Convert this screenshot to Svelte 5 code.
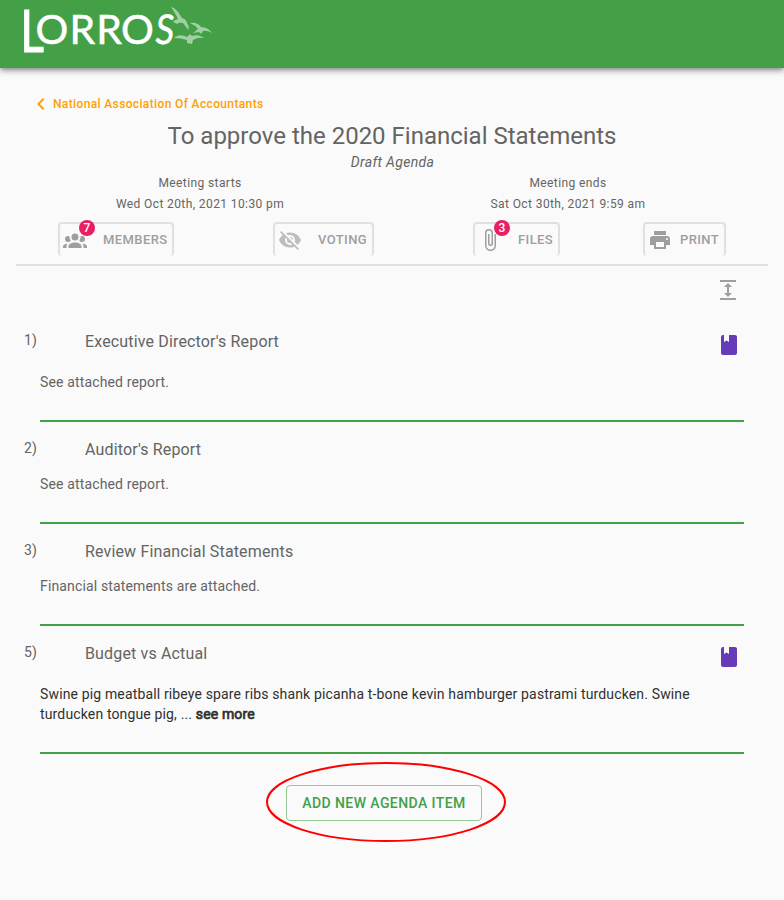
<script>
  const icons = {
    members: 'M12,5.5A3.5,3.5 0 0,1 15.5,9A3.5,3.5 0 0,1 12,12.5A3.5,3.5 0 0,1 8.5,9A3.5,3.5 0 0,1 12,5.5M5,8C5.56,8 6.08,8.15 6.53,8.42C6.38,9.85 6.8,11.27 7.66,12.38C7.16,13.34 6.16,14 5,14A3,3 0 0,1 2,11A3,3 0 0,1 5,8M19,8A3,3 0 0,1 22,11A3,3 0 0,1 19,14C17.84,14 16.84,13.34 16.34,12.38C17.2,11.27 17.62,9.85 17.47,8.42C17.92,8.15 18.44,8 19,8M5.5,18.25C5.5,16.18 8.41,14.5 12,14.5C15.59,14.5 18.5,16.18 18.5,18.25V20H5.5V18.25M0,20V18.5C0,17.11 1.89,15.94 4.45,15.6C3.86,16.28 3.5,17.22 3.5,18.25V20H0M24,20H20.5V18.25C20.5,17.22 20.14,16.28 19.55,15.6C22.11,15.94 24,17.11 24,18.5V20Z',
    voting: 'M11.83,9L15,12.16C15,12.11 15,12.05 15,12A3,3 0 0,0 12,9C11.94,9 11.89,9 11.83,9M7.53,9.8L9.08,11.35C9.03,11.56 9,11.77 9,12A3,3 0 0,0 12,15C12.22,15 12.44,14.97 12.65,14.92L14.2,16.47C13.53,16.8 12.79,17 12,17A5,5 0 0,1 7,12C7,11.21 7.2,10.47 7.53,9.8M2,4.27L4.28,6.55L4.73,7C3.08,8.3 1.78,10 1,12C2.73,16.39 7,19.5 12,19.5C13.55,19.5 15.03,19.2 16.38,18.66L16.81,19.08L19.73,22L21,20.73L3.27,3M12,7A5,5 0 0,1 17,12C17,12.64 16.87,13.26 16.64,13.82L19.57,16.75C21.07,15.5 22.27,13.86 23,12C21.27,7.61 17,4.5 12,4.5C10.6,4.5 9.26,4.75 8,5.2L10.17,7.35C10.74,7.13 11.35,7 12,7Z',
    files: 'M16.5,6V17.5A4,4 0 0,1 12.5,21.5A4,4 0 0,1 8.5,17.5V5A2.5,2.5 0 0,1 11,2.5A2.5,2.5 0 0,1 13.5,5V15.5A1,1 0 0,1 12.5,16.5A1,1 0 0,1 11.5,15.5V6H10V15.5A2.5,2.5 0 0,0 12.5,18A2.5,2.5 0 0,0 15,15.5V5A4,4 0 0,0 11,1A4,4 0 0,0 7,5V17.5A5.5,5.5 0 0,0 12.5,23A5.5,5.5 0 0,0 18,17.5V6H16.5Z',
    print: 'M18,3H6V7H18M19,12A1,1 0 0,1 18,11A1,1 0 0,1 19,10A1,1 0 0,1 20,11A1,1 0 0,1 19,12M16,19H8V14H16M19,8H5A3,3 0 0,0 2,11V17H6V21H18V17H22V11A3,3 0 0,0 19,8Z',
    book: 'M18,22A2,2 0 0,0 20,20V4C20,2.89 19.1,2 18,2H12V9L9.5,7.5L7,9V2H6A2,2 0 0,0 4,4V20A2,2 0 0,0 6,22H18Z',
    expand: 'M4 20h16v2H4zM4 2h16v2H4zm9 7h3l-4-4-4 4h3v6H8l4 4 4-4h-3z',
    back: 'M15.41,16.58L10.83,12L15.41,7.41L14,6L8,12L14,18L15.41,16.58Z'
  };
  const tabs = [
    { key: 'members', label: 'Members', badge: 7 },
    { key: 'voting', label: 'Voting' },
    { key: 'files', label: 'Files', badge: 3 },
    { key: 'print', label: 'Print' }
  ];
  const items = [
    { n: 1, title: "Executive Director's Report", text: 'See attached report.', marked: true },
    { n: 2, title: "Auditor's Report", text: 'See attached report.' },
    { n: 3, title: 'Review Financial Statements', text: 'Financial statements are attached.' },
    { n: 5, title: 'Budget vs Actual', text: 'Swine pig meatball ribeye spare ribs shank picanha t-bone kevin hamburger pastrami turducken. Swine turducken tongue pig, ...', marked: true, more: true }
  ];
</script>

{#snippet icon(name, size = 24)}
  <svg width={size} height={size} viewBox="0 0 24 24" fill="currentColor"><path d={icons[name]} /></svg>
{/snippet}

<div class="app">
  <header>
    <svg class="logo" width="216" height="64" viewBox="0 0 216 64">
      <text class="initial" transform="translate(20.2 51.7) scale(.78 1)">L</text>
      <text class="word" y="44.3" x="35.4 69.5 96.3 121">ORRO</text>
      <text class="word" transform="translate(154.3 44.3) skewX(-6) scale(.84 1)">S</text>
      <g fill="#a2d0a4">
        <path d="M171 7C175 8 178 11 180 15L182 18Q186 19 187 23Q189 26 189 30C186 28 185 25 183 23Q179 22 177 24L173 22Q174 20 178 19C176 15 174 11 171 7Z" />
        <path d="M190 23C195 22 199 24 201 27Q208 27 212 33Q207 30 203 31L201 34L199 32L193 33L198 29Q195 25 190 23Z" />
        <path d="M174 38C178 34 183 35 187 37L190 34L192 36C197 34 202 36 204 38Q198 37 193 40L192 44L187 43L187 40Q181 38 174 38Z" />
      </g>
    </svg>
  </header>

  <main>
    <a class="back" href="#top">{@render icon('back')}<span>National Association Of Accountants</span></a>
    <h1>To approve the 2020 Financial Statements</h1>
    <p class="status">Draft Agenda</p>
    <section class="times">
      <div><span>Meeting starts</span><span>Wed Oct 20th, 2021 10:30 pm</span></div>
      <div><span>Meeting ends</span><span>Sat Oct 30th, 2021 9:59 am</span></div>
    </section>
    <nav>
      {#each tabs as tab}
        <button class="tab {tab.key}">
          <span class="glyph">{@render icon(tab.key)}{#if tab.badge}<b class="badge">{tab.badge}</b>{/if}</span>
          <span class="label">{tab.label}</span>
        </button>
      {/each}
    </nav>
    <div class="tools">{@render icon('expand')}</div>

    {#each items as item}
      <article class:marked={item.marked} class:long={item.more}>
        <div class="head">
          <span class="num">{item.n})</span>
          <h2>{item.title}</h2>
          {#if item.marked}<span class="book">{@render icon('book')}</span>{/if}
        </div>
        <p class="body">{item.text}{#if item.more}{' '}<b>see more</b>{/if}</p>
      </article>
    {/each}

    <div class="add">
      <button>Add new agenda item</button>
      <svg class="ring" width="242" height="82" viewBox="0 0 242 82"><ellipse cx="121" cy="41" rx="119" ry="39" /></svg>
    </div>
  </main>
</div>

<style>
  :global(body) { background: #fafafa; }
  .app { height: 900px; overflow: hidden; background: #fafafa; color: #646464; font-family: Roboto, sans-serif; }
  svg { display: block; flex: none; }
  h1, h2, p { margin: 0; font-weight: 400; }
  button { font-family: inherit; background: none; margin: 0; text-transform: uppercase; }
  header { height: 68px; background: #43a047; box-shadow: 0 2px 4px -1px rgba(0,0,0,.3), 0 4px 5px rgba(0,0,0,.16), 0 1px 10px rgba(0,0,0,.12); }
  .logo { overflow: visible; }
  .logo text { fill: #fff; font-family: Lato, sans-serif; }
  .logo .initial { font-size: 59px; stroke: #fff; stroke-width: 1px; }
  .logo .word { font-size: 41px; stroke: #fff; stroke-width: .5px; }
  main { padding-top: 26px; }
  .back { display: flex; align-items: center; height: 20px; margin-left: 29px; color: #ffa000; font-size: 12px; font-weight: 500; letter-spacing: .36px; text-decoration: none; }
  h1 { height: 32px; line-height: 32px; margin-top: 6px; font-size: 24px; text-align: center; }
  .status { height: 20px; line-height: 20px; padding-left: 1px; font-size: 14px; font-style: italic; text-align: center; letter-spacing: .33px; }
  .times { display: grid; grid-template-columns: 368px 368px; padding: 1px 16px 0; height: 49px; font-size: 12px; letter-spacing: .4px; }
  .times div { display: flex; flex-direction: column; text-align: center; }
  .times span { line-height: 21px; }
  nav { display: flex; height: 42px; margin: 0 16px; padding-left: 42px; border-bottom: 2px solid #e0e0e0; }
  .tab { display: flex; align-items: center; box-sizing: border-box; height: 34px; padding: 0 0 0 3px; border: 2px solid #e0e0e0; border-bottom: 0; border-radius: 4px; color: #9e9e9e; font-size: 13px; font-weight: 500; letter-spacing: .4px; }
  .members { width: 116px; }
  .voting { width: 101px; margin-left: 99px; }
  .files { width: 87px; margin-left: 99px; }
  .print { width: 83px; margin-left: 83px; }
  .glyph { position: relative; }
  .voting .glyph { color: #bdbdbd; }
  .badge { position: absolute; left: 16px; top: -8px; width: 16px; height: 16px; border-radius: 50%; background: #e91e63; color: #fff; font-size: 12px; line-height: 16px; font-weight: 500; text-align: center; letter-spacing: 0; }
  .label { margin-left: 16px; padding-bottom: 2px; }
  .print .label { margin-left: 8px; }
  .tools { display: flex; justify-content: flex-end; height: 48px; padding: 12px 44px 0 0; box-sizing: border-box; color: #9e9e9e; }
  article { box-sizing: border-box; height: 102px; margin: 0 40px; border-bottom: 2px solid #43a047; }
  article.marked { height: 108px; }
  article.long { height: 128px; }
  .head { display: flex; height: 52px; margin-left: -16px; }
  .num { width: 61px; padding-top: 16px; font-size: 14px; line-height: 20px; letter-spacing: .25px; }
  h2 { flex: 1; padding-top: 16px; font-size: 16px; line-height: 24px; letter-spacing: .15px; }
  .book { padding: 19px 3px 0 0; color: #673ab7; }
  .body { line-height: 20px; font-size: 14px; letter-spacing: .146px; }
  .marked .head { height: 58px; }
  .long .body { color: #303030; }
  .long b { font-weight: 400; -webkit-text-stroke: .7px currentColor; }
  .add { position: relative; display: flex; justify-content: center; padding: 31px 16px 0 0; }
  .add button { width: 196px; height: 36px; padding: 0; border: 1px solid #92c994; border-radius: 4px; color: #43a047; font-size: 14px; font-weight: 500; letter-spacing: .42px; }
  .ring { position: absolute; left: 265px; top: 7px; fill: none; stroke: #f00; stroke-width: 2; pointer-events: none; }
</style>
